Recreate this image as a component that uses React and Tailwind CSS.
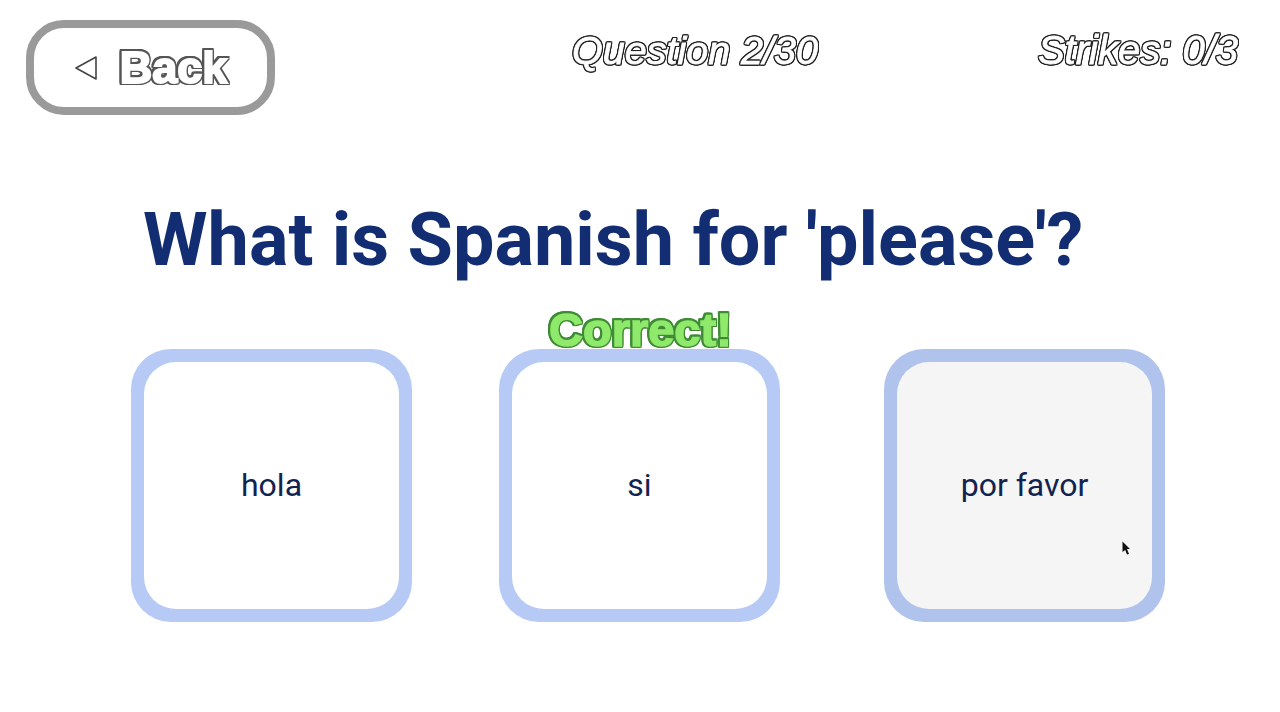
export default function App() {
  const cards = [
    { label: "hola", outer: "bg-[#b7caf5]", inner: "bg-white" },
    { label: "si", outer: "ml-[87px] bg-[#b7caf5]", inner: "bg-white" },
    { label: "por favor", outer: "ml-[104px] bg-[#b0c3ed]", inner: "bg-[#f5f5f5]" },
  ];
  return (
    <div className="relative h-[712px] w-[1280px] overflow-hidden bg-white font-['Roboto',sans-serif]">
      <div className="flex items-start pl-[26px] pr-[42px] pt-[20px]">
        <button className="flex h-[95px] w-[249px] items-center justify-center gap-[22px] rounded-[38px] border-[8px] border-[#9a9a9a] bg-white">
          <svg width="24" height="26" viewBox="0 0 24 26" fill="none" stroke="#444" strokeWidth="1.6">
            <path d="M22 2 L2 13 L22 24 Z" strokeLinejoin="round" />
          </svg>
          <span className="font-['Liberation_Sans',sans-serif] text-[45px] font-bold leading-none text-white [-webkit-text-stroke:2px_#fff] [filter:drop-shadow(1.1px_0_0_#555)_drop-shadow(-1.1px_0_0_#555)_drop-shadow(0_1.1px_0_#555)_drop-shadow(0_-1.1px_0_#555)]">Back</span>
        </button>
        <div className="ml-[297px] mt-[7px] font-['Liberation_Sans',sans-serif] text-[39.5px] italic leading-[46px] text-white [-webkit-text-stroke:0.8px_#fff] [filter:drop-shadow(1px_0_0_#222)_drop-shadow(-1px_0_0_#222)_drop-shadow(0_1px_0_#222)_drop-shadow(0_-1px_0_#222)]">Question 2/30</div>
        <div className="ml-auto mt-[7px] font-['Liberation_Sans',sans-serif] text-[40px] italic leading-[46px] text-white [-webkit-text-stroke:0.8px_#fff] [filter:drop-shadow(1px_0_0_#222)_drop-shadow(-1px_0_0_#222)_drop-shadow(0_1px_0_#222)_drop-shadow(0_-1px_0_#222)]">Strikes: 0/3</div>
      </div>
      <h1 className="mt-[85px] pl-[143px] text-[73.8px] font-bold leading-[80px] text-[#132d72]">What is Spanish for 'please'?</h1>
      <div className="mt-[69px] flex pl-[131px]">
        {cards.map((c) => (
          <div key={c.label} className={`h-[273px] w-[281px] rounded-[40px] p-[13px] ${c.outer}`}>
            <div className={`flex h-full items-center justify-center rounded-[32px] pb-[2px] text-[32px] text-[#13234f] ${c.inner}`}>
              {c.label}
            </div>
          </div>
        ))}
      </div>
      <div className="absolute left-[549px] top-[304px] font-['Liberation_Sans',sans-serif] text-[47px] font-bold leading-[52px] text-[#8fe96b] [-webkit-text-stroke:1.5px_#8fe96b] [filter:drop-shadow(1.4px_0_0_#3f8a35)_drop-shadow(-1.4px_0_0_#3f8a35)_drop-shadow(0_1.4px_0_#3f8a35)_drop-shadow(0_-1.4px_0_#3f8a35)]">Correct!</div>
      <svg className="absolute left-[1122px] top-[541px]" width="9" height="14" viewBox="0 0 9 14" fill="#111">
        <path d="M0.5 0.5 L8 8 L5 8 L7 13 L5 13.5 L3.2 9 L0.5 11 Z" />
      </svg>
    </div>
  );
}
